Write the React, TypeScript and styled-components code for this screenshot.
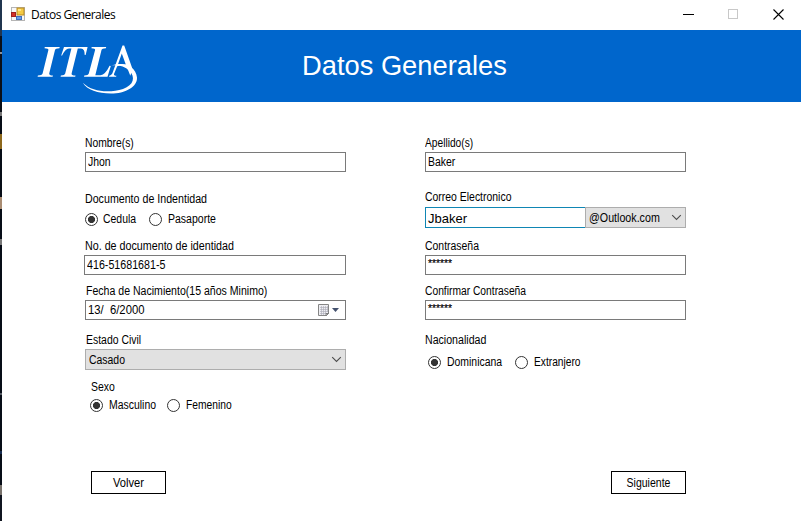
import React from "react";
import styled, { createGlobalStyle, css } from "styled-components";

const Global = createGlobalStyle`
  * { box-sizing: border-box; }
  html, body { margin: 0; padding: 0; }
  body { background: #fff; overflow: hidden; }
  svg { display: block; flex: none; }
`;

const Screen = styled.div`
  display: flex;
  width: 801px;
  height: 521px;
  background: #fff;
  color: #000;
  font: 12px/14px "Liberation Sans", Arial, sans-serif;
`;

const Desktop = styled.div`
  flex: none;
  width: 2px;
  background: linear-gradient(
    #20354f 0 36px, #0a0f18 36px 52px, #8d9197 52px 54px, #0a0f18 54px 112px,
    #777 112px 116px, #070d17 116px 134px, #8d681c 134px 149px, #070d17 149px 197px,
    #a98c72 197px 209px, #070d17 209px 239px, #777 239px 245px, #070d17 245px 393px,
    #555b64 393px 395px, #070d17 395px 451px, #172c50 451px 454px, #070d17 454px 485px,
    #77716b 485px 495px, #101520 495px
  );
`;

const Window = styled.div`
  flex: 1;
  display: flex;
  flex-direction: column;
`;

const TitleBar = styled.div`
  height: 30px;
  display: flex;
  align-items: center;
  padding: 0 17px 2px 9px;
`;

const Caption = styled.span`
  flex: 1;
  margin-left: 6px;
  padding-top: 1px;
  font: 12px/16px "Open Sans", "Noto Sans", sans-serif;
  letter-spacing: -0.55px;
`;

const Controls = styled.div`
  display: flex;
  gap: 34px;
`;

const Banner = styled.header`
  height: 72px;
  display: grid;
  grid-template-columns: 300px 1fr;
  background: #0066cc;
  color: #fff;
`;

const Heading = styled.h1`
  margin: 20px 0 0;
  font: 27.3px/32px "Liberation Sans", Arial, sans-serif;
`;

const Form = styled.main`
  display: grid;
  grid-template-columns: 261px 261px;
  column-gap: 79px;
  padding: 34px 0 0 83px;
  height: 369px;
`;

const Column = styled.section`
  display: flex;
  flex-direction: column;
`;

const Field = styled.div<{ $h: number; $gap?: number; $indent?: number }>`
  height: ${(p) => p.$h}px;
  display: flex;
  flex-direction: column;
  gap: ${(p) => p.$gap ?? 2}px;
  padding-left: ${(p) => p.$indent ?? 0}px;
`;

const Text = styled.span<{ $fit?: number; $dx?: number; $center?: boolean }>`
  display: block;
  height: 14px;
  white-space: pre;
  margin-left: ${(p) => p.$dx ?? 0}px;
  transform: scaleX(${(p) => p.$fit ?? 0.87});
  transform-origin: ${(p) => (p.$center ? "center" : "left")} center;
`;

const Box = styled.div<{ $wide?: boolean }>`
  height: 20px;
  flex: none;
  display: flex;
  align-items: center;
  justify-content: space-between;
  border: 1px solid #7a7a7a;
  padding: 0 6px 0 2px;
  ${(p) => p.$wide && css`margin-left: -1px;`}
`;

const Password = styled(Box)`
  align-items: flex-start;
  font-size: 11px;
  -webkit-text-stroke: 0.2px #000;
`;

const Combo = styled(Box)`
  height: 21px;
  background: #e1e1e1;
  border-color: #adadad;
  padding: 0 3px;
`;

const EmailRow = styled.div`
  display: grid;
  grid-template-columns: 160px 101px;
`;

const EmailBox = styled(Box)`
  && {
    height: 21px;
    border: 1px solid #0f86b4;
    border-right: 0;
    padding-top: 2px;
    font-size: 13px;
  }
`;

const Radios = styled.div<{ $indent?: number }>`
  display: flex;
  padding-left: ${(p) => p.$indent ?? 0}px;
`;

const Option = styled.div<{ $w: number; $gap?: number }>`
  width: ${(p) => p.$w}px;
  display: flex;
  align-items: center;
  gap: ${(p) => p.$gap ?? 6}px;
`;

const Dot = styled.span<{ $on?: boolean }>`
  flex: none;
  width: 13px;
  height: 13px;
  border: 1px solid #333;
  border-radius: 50%;
  background: ${(p) => (p.$on ? "radial-gradient(circle, #333 0 3.2px, #fff 3.9px)" : "#fff")};
`;

const Footer = styled.footer`
  display: flex;
  justify-content: space-between;
  padding: 0 115px 0 89px;
`;

const Button = styled.button`
  width: 75px;
  height: 23px;
  padding: 0;
  border: 1px solid #000;
  background: #fff;
  color: #000;
  font: inherit;
`;

const DateButton = styled.div`
  display: flex;
  align-items: center;
  gap: 2px;
`;

const Chevron = () => (
  <svg width="11" height="7" viewBox="0 0 11 7" fill="none" stroke="#4c4c4c" strokeWidth="1.1">
    <path d="M1.2 1.2 5.5 5.4 9.8 1.2" />
  </svg>
);

const AppIcon = () => (
  <svg width="14" height="14" viewBox="0 0 14 14">
    <rect x=".5" y=".5" width="13" height="13" fill="#f8f8f8" stroke="#b5b5b5" />
    <rect x="6" y="1" width="7" height="7" fill="#f4ca45" stroke="#b98b25" />
    <rect x="7" y="2" width="3" height="2" fill="#ffe58b" />
    <rect x=".5" y="5.5" width="4" height="4" fill="#d33029" stroke="#9c211e" />
    <rect x="5.5" y="9.5" width="5" height="3" fill="#679be8" stroke="#3e6fbe" />
  </svg>
);

const Logo = () => (
  <svg width="300" height="72" viewBox="2 30 300 72" fill="#fff">
    <path d="M44.8 47H59.7L59.4 48.2Q55.5 48.3 55 50L49.2 73.5Q48.9 75.4 52.9 75.6L52.6 76.8H37.6L37.9 75.6Q42.1 75.4 42.6 73.6L48.4 50Q48.7 48.4 44.5 48.2Z" />
    <path d="M64 46.9H87.6L85.6 55H84.7Q84.9 48.7 81 48.4H77.8L71.6 73.4Q71.2 75.4 75.5 75.6L75.2 76.8H60.6L60.9 75.6Q64.7 75.4 65.2 73.6L71.4 48.4H69Q65 48.7 62.1 55.6H61.2Z" />
    <path d="M91.7 47H106.2L105.9 48.2Q102 48.3 101.5 50L95.3 75.2H100.5Q105.3 74.8 109.6 65.8L110.8 66 107.5 76.8H84L84.3 75.6Q88.3 75.4 88.8 73.6L95.1 50Q95.4 48.4 91.4 48.2Z" />
    <path fillRule="evenodd" d="M109 76.8 109.3 75.8Q111.2 75.7 112.3 73.6L122.5 45.6H124.2L132.6 69.2 130.3 75.8 126.5 66Q121 64.8 117.2 66.2L114 74Q113.6 75.7 116.4 75.8L116.1 76.8ZM118 64.3Q121.5 63.6 125.8 64.4L121.8 53.6Z" />
    <path d="M111 65.6C122 61.3 136 65.5 137 77.5C137.5 87 125 93.6 111 93.6C98 93.5 87 89.8 82.8 82.8C92.5 92.5 110 93 123 89C134 85 135.5 77 129.5 71C124.5 66.2 118 64.7 111 65.6Z" />
  </svg>
);

const CalendarIcon = () => (
  <svg width="12" height="13" viewBox="0 0 12 13">
    <path d="M.5 .5H10.5V9.5L8.5 11.5H.5Z" fill="#eeeef2" stroke="#858585" />
    <path d="M2 3.5H10M2 5.5H10M2 7.5H10M2 9.5H8M3.5 2V11M5.5 2V11M7.5 2V10M9.5 2V8" stroke="#aaaab5" strokeWidth=".6" />
    <path d="M8 11.5V9.5H10.5Z" fill="#fff" stroke="#666" strokeWidth=".8" />
  </svg>
);

type RadioProps = { label: string; width: number; on?: boolean; fit?: number; gap?: number };
const Radio = ({ label, width, on, fit, gap }: RadioProps) => (
  <Option $w={width} $gap={gap}><Dot $on={on} /><Text $fit={fit}>{label}</Text></Option>
);

export default function App() {
  return (
    <Screen>
      <Global />
      <Desktop />
      <Window>
        <TitleBar>
          <AppIcon />
          <Caption>Datos Generales</Caption>
          <Controls>
            <svg width="11" height="11"><path d="M0 5.5H11" stroke="#000" /></svg>
            <svg width="11" height="11"><rect x=".5" y=".5" width="9" height="9" fill="none" stroke="#c8c8c8" /></svg>
            <svg width="11" height="11"><path d="M.5 .5 10.5 10.5M10.5 .5 .5 10.5" stroke="#000" strokeWidth="1.1" /></svg>
          </Controls>
        </TitleBar>
        <Banner><Logo /><Heading>Datos Generales</Heading></Banner>
        <Form>
          <Column>
            <Field $h={56}><Text $fit={0.86}>Nombre(s)</Text><Box><Text>Jhon</Text></Box></Field>
            <Field $h={47} $gap={6}>
              <Text $fit={0.888}>Documento de Indentidad</Text>
              <Radios><Radio label="Cedula" width={64} gap={5} on /><Radio label="Pasaporte" width={70} fit={0.876} /></Radios>
            </Field>
            <Field $h={45}><Text $fit={0.893}>No. de documento de identidad</Text><Box $wide><Text $fit={0.89}>416-51681681-5</Text></Box></Field>
            <Field $h={49}>
              <Text $dx={1} $fit={0.88}>Fecha de Nacimiento(15 años Minimo)</Text>
              <Box>
                <Text $fit={0.94}>{"13/  6/2000"}</Text>
                <DateButton>
                  <CalendarIcon />
                  <svg width="7" height="4"><path d="M0 0H7L3.5 4Z" fill="#44516e" /></svg>
                </DateButton>
              </Box>
            </Field>
            <Field $h={47}><Text $dx={1}>Estado Civil</Text><Combo><Text>Casado</Text><Chevron /></Combo></Field>
            <Field $h={35} $gap={4} $indent={5}>
              <Text $dx={1}>Sexo</Text>
              <Radios><Radio label="Masculino" width={77} on /><Radio label="Femenino" width={70} fit={0.855} /></Radios>
            </Field>
          </Column>
          <Column>
            <Field $h={54}><Text $fit={0.85}>Apellido(s)</Text><Box><Text>Baker</Text></Box></Field>
            <Field $h={49} $gap={3}>
              <Text>Correo Electronico</Text>
              <EmailRow><EmailBox>Jbaker</EmailBox><Combo><Text $fit={0.89}>@Outlook.com</Text><Chevron /></Combo></EmailRow>
            </Field>
            <Field $h={45}><Text>Contraseña</Text><Password><Text $fit={0.93}>******</Text></Password></Field>
            <Field $h={49}><Text $fit={0.856}>Confirmar Contraseña</Text><Password><Text $fit={0.93}>******</Text></Password></Field>
            <Field $h={40} $gap={8}>
              <Text $fit={0.884}>Nacionalidad</Text>
              <Radios $indent={3}><Radio label="Dominicana" width={87} on /><Radio label="Extranjero" width={70} fit={0.85} /></Radios>
            </Field>
          </Column>
        </Form>
        <Footer>
          <Button><Text $fit={0.93} $center>Volver</Text></Button>
          <Button><Text $fit={0.876} $center>Siguiente</Text></Button>
        </Footer>
      </Window>
    </Screen>
  );
}
